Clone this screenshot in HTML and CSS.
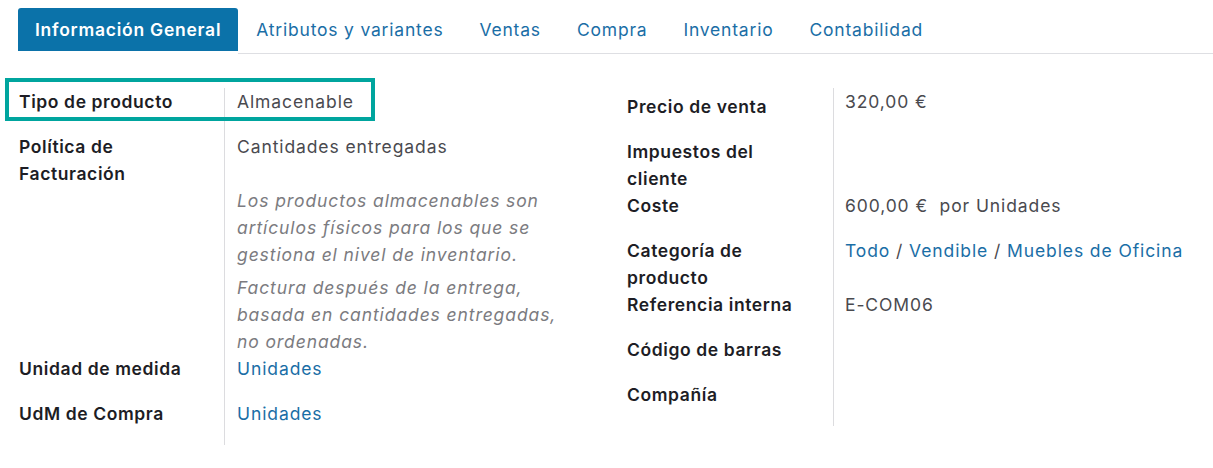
FILE: index.html
```html
<!DOCTYPE html>
<html lang="es">
<head>
<meta charset="utf-8">
<title>Información General</title>
<link rel="stylesheet" href="styles.css">
</head>
<body>
<nav class="tabs">
  <a class="tab tab-active">Información General</a>
  <div class="tab-rest">
    <a class="tab">Atributos y variantes</a>
    <a class="tab">Ventas</a>
    <a class="tab">Compra</a>
    <a class="tab">Inventario</a>
    <a class="tab">Contabilidad</a>
  </div>
</nav>

<main class="sheet">
  <div class="highlight"></div>

  <section class="group group-left">
    <div class="label">Tipo de producto</div>
    <div class="value">Almacenable</div>

    <div class="label tight">Política de Facturación</div>
    <div class="value tight">
      <div>Cantidades entregadas</div>
      <p class="help help-first">Los productos almacenables son artículos físicos para los que se gestiona el nivel de inventario.</p>
      <p class="help">Factura después de la entrega, basada en cantidades entregadas, no ordenadas.</p>
    </div>

    <div class="label">Unidad de medida</div>
    <div class="value"><a class="link">Unidades</a></div>

    <div class="label">UdM de Compra</div>
    <div class="value"><a class="link">Unidades</a></div>
  </section>

  <section class="group group-right">
    <div class="label label-first">Precio de venta</div>
    <div class="value">320,00 €</div>

    <div class="label tight">Impuestos del cliente</div>
    <div class="value tight"></div>

    <div class="label">Coste</div>
    <div class="value">600,00 €&nbsp; por Unidades</div>

    <div class="label tight">Categoría de producto</div>
    <div class="value tight"><a class="link">Todo</a> / <a class="link">Vendible</a> / <a class="link">Muebles de Oficina</a></div>

    <div class="label">Referencia interna</div>
    <div class="value">E-COM06</div>

    <div class="label">Código de barras</div>
    <div class="value"></div>

    <div class="label">Compañía</div>
    <div class="value"></div>
  </section>
</main>
</body>
</html>
```
FILE: styles.css
```css
* { box-sizing: border-box; }

body {
  margin: 0;
  background: #ffffff;
  font-family: "Inter", "Noto Sans", sans-serif;
  font-size: 17.5px;
  line-height: 27px;
  color: #4a4a4f;
  letter-spacing: 0.9px;
}

/* Tabs */
.tabs {
  display: flex;
  align-items: flex-start;
  padding: 8px 0 0 18px;
}

.tab {
  display: block;
  line-height: 43px;
  padding: 0 18px;
  color: #1a6ea6;
  letter-spacing: 0.8px;
  white-space: nowrap;
}

.tab-active {
  padding: 0 17px;
  background: #0b72a9;
  color: #ffffff;
  font-weight: 600;
  letter-spacing: 0.75px;
  border-radius: 3px 3px 0 0;
}

.tab-rest {
  flex: 1;
  display: flex;
  height: 46px;
  border-bottom: 1px solid #dedfe3;
}

/* Sheet */
.sheet {
  position: relative;
  display: grid;
  grid-template-columns: 608px 1fr;
  padding: 34px 0 0 19px;
}

.highlight {
  position: absolute;
  left: 5px;
  top: 24px;
  width: 370px;
  height: 43px;
  border: 4.5px solid #00a59e;
}

.group {
  display: grid;
  align-content: start;
}

.group-left { grid-template-columns: 205px 1fr; }
.group-right { grid-template-columns: 206px 1fr; }

.label {
  padding: 0 26px 18px 0;
  font-weight: 600;
  color: #1d1d25;
  letter-spacing: 0.6px;
}

.value {
  padding: 0 0 18px 12px;
  border-left: 1px solid #dcdcdf;
  white-space: nowrap;
}

.group-right .value { padding-left: 11px; }

.label.tight, .value.tight { padding-bottom: 0; }

.label-first { padding-top: 5px; }

.help {
  margin: 6px 0 0;
  max-width: 330px;
  font-style: italic;
  color: #7b7b80;
  white-space: normal;
}

.help-first { margin-top: 27px; }

.link {
  color: #1a6ea6;
  text-decoration: none;
}
```
